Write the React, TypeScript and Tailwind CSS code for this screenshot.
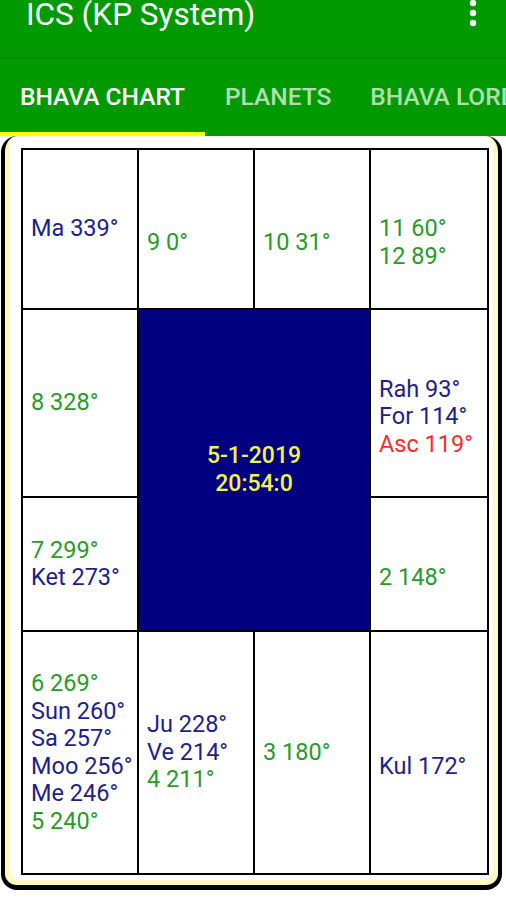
import React from "react";

type Line = { t: string; c: "b" | "g" | "r" | "e" };

const color: Record<string, string> = {
  b: "text-[#1e1e8c]",
  g: "text-[#2a9a2a]",
  r: "text-[#ff2b2b]",
  e: "text-transparent",
};

function Cell({ lines, className = "" }: { lines: Line[]; className?: string }) {
  return (
    <div className={`bg-white flex flex-col justify-center pl-[8px] text-[23.5px] leading-[27.5px] ${className}`}>
      {lines.map((l, i) => (
        <div key={i} className={`whitespace-nowrap ${color[l.c]}`}>
          {l.c === "e" ? "\u00a0" : l.t}
        </div>
      ))}
    </div>
  );
}

const E: Line = { t: "", c: "e" };

export default function App() {
  return (
    <div className="w-[506px] h-[900px] overflow-hidden bg-white font-['Roboto',sans-serif]">
      {/* Title bar */}
      <div className="h-[57px] bg-[#009900] flex justify-between pl-[26px] pr-[29px]">
        <div className="text-white text-[31.5px] leading-[30px] whitespace-nowrap">ICS (KP System)</div>
        <svg width="8" height="28" viewBox="0 0 8 28" className="mt-[-1px]">
          <circle cx="4" cy="4" r="3.2" fill="#fff" />
          <circle cx="4" cy="14" r="3.2" fill="#fff" />
          <circle cx="4" cy="24" r="3.2" fill="#fff" />
        </svg>
      </div>
      {/* Tabs */}
      <div className="h-[79px] bg-[#009900] border-t-[2px] border-[#008a00] flex whitespace-nowrap">
        <div className="px-[20px] flex items-center pt-[4px] border-b-[4px] border-[#ffff00] text-white font-medium text-[24.5px] leading-none">
          BHAVA CHART
        </div>
        <div className="px-[20px] flex items-center pt-[4px] border-b-[4px] border-transparent text-white/70 font-medium text-[24.5px] leading-none">
          PLANETS
        </div>
        <div className="px-[19px] flex items-center pt-[4px] border-b-[4px] border-transparent text-white/70 font-medium text-[24.5px] leading-none">
          BHAVA LORDS
        </div>
      </div>
      {/* Card */}
      <div className="ml-[1px] w-[501px] rounded-[16px] border-l-[4px] border-r-[4px] border-b-[5px] border-black bg-[#fcf9c2] px-[5px] pb-[5px]">
        <div className="bg-white rounded-[10px] pt-[12px] pl-[11px] pr-[4px] pb-[5px]">
          <div className="grid grid-cols-[114px_114px_114px_116px] grid-rows-[158px_186px_132px_241px] gap-[2px] p-[2px] bg-black w-[468px]">
            <Cell lines={[{ t: "Ma 339°", c: "b" }]} />
            <Cell lines={[E, { t: "9 0°", c: "g" }]} />
            <Cell lines={[E, { t: "10 31°", c: "g" }]} />
            <Cell lines={[E, { t: "11 60°", c: "g" }, { t: "12 89°", c: "g" }]} />

            <Cell lines={[{ t: "8 328°", c: "g" }]} />
            <div className="col-span-2 row-span-2 bg-[#000080] flex flex-col items-center justify-center text-[#f2f24e] font-medium text-[23px] leading-[28px]">
              <div>5-1-2019</div>
              <div>20:54:0</div>
            </div>
            <Cell
              lines={[E, { t: "Rah 93°", c: "b" }, { t: "For 114°", c: "b" }, { t: "Asc 119°", c: "r" }]}
            />

            <Cell lines={[{ t: "7 299°", c: "g" }, { t: "Ket 273°", c: "b" }]} />
            <Cell lines={[E, { t: "2 148°", c: "g" }]} />

            <Cell
              lines={[
                { t: "6 269°", c: "g" },
                { t: "Sun 260°", c: "b" },
                { t: "Sa 257°", c: "b" },
                { t: "Moo 256°", c: "b" },
                { t: "Me 246°", c: "b" },
                { t: "5 240°", c: "g" },
              ]}
            />
            <Cell lines={[{ t: "Ju 228°", c: "b" }, { t: "Ve 214°", c: "b" }, { t: "4 211°", c: "g" }]} />
            <Cell lines={[{ t: "3 180°", c: "g" }]} />
            <Cell lines={[E, { t: "Kul 172°", c: "b" }]} />
          </div>
        </div>
      </div>
    </div>
  );
}
